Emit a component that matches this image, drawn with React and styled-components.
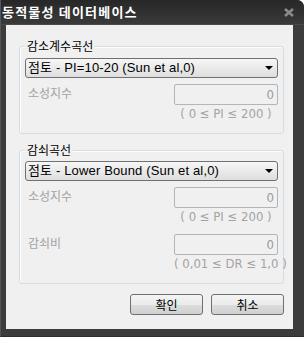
import React, { useState } from "react";
import styled, { createGlobalStyle } from "styled-components";

const GlobalStyle = createGlobalStyle`
  html, body {
    margin: 0;
    padding: 0;
    background: #ffffff;
  }
  body {
    font-family: "Liberation Sans", "Noto Sans CJK KR", sans-serif;
  }
`;

const Window = styled.div`
  width: 304px;
  height: 337px;
  box-sizing: border-box;
  display: flex;
  flex-direction: column;
  background: #3c3c3c;
  border-left: 1px solid #555555;
  border-bottom: 1px solid #2e2e2e;
  border-top-right-radius: 7px;
  overflow: hidden;
`;

const TitleBar = styled.div`
  height: 24px;
  flex: none;
  display: flex;
  align-items: center;
  justify-content: space-between;
  padding: 0 10px 0 1px;
  background: linear-gradient(#272727, #3a3a3a);
  border-bottom: 1px solid #4a4a4a;
`;

const Title = styled.span`
  color: #ffffff;
  font-family: "Noto Sans CJK KR", sans-serif;
  font-size: 13px;
  font-weight: 700;
  line-height: 16px;
  letter-spacing: 1.2px;
`;

const CloseIcon = () => (
  <svg width="10" height="9" viewBox="0 0 10 9">
    <path d="M1 1 L9 8 M9 1 L1 8" stroke="#8c8c8c" strokeWidth="2.4" />
  </svg>
);

const Body = styled.div`
  flex: 1;
  margin: 0 11px 7px 5px;
  background: #f0f0f0;
  display: flex;
  flex-direction: column;
  padding: 21px 9px 0 13px;
  box-sizing: border-box;
`;

const Group = styled.div`
  flex: none;
  display: flex;
  flex-direction: column;
  border: 1px solid #d3dde5;
  border-radius: 3px;
  box-shadow: inset 1px 1px 0 #ffffff;
  padding: 0 5px ${(p) => p.$bottom}px 5px;
  margin-bottom: ${(p) => p.$gap}px;
`;

const Legend = styled.span`
  align-self: flex-start;
  height: 16px;
  margin-top: -9px;
  padding: 0 2px;
  background: #f0f0f0;
  color: #000000;
  font-family: "Noto Sans CJK KR", sans-serif;
  font-size: 12px;
  line-height: 16px;
`;

const SelectBox = styled.div`
  flex: none;
  margin-top: ${(p) => p.$top}px;
  height: 20px;
  box-sizing: border-box;
  display: flex;
  align-items: center;
  justify-content: space-between;
  padding: 0 4px 0 2px;
  border: 1px solid #707070;
  border-radius: 3px;
  background: linear-gradient(#f6f6f6, #dedede);
  color: #000000;
  font-size: 13px;
  overflow: hidden;
  cursor: default;
`;

const SelectText = styled.span`
  line-height: 16px;
  letter-spacing: 0.15px;
  white-space: nowrap;
`;

const Arrow = styled.span`
  width: 0;
  height: 0;
  border-left: 4px solid transparent;
  border-right: 4px solid transparent;
  border-top: 4px solid #000000;
`;

const FieldRow = styled.div`
  flex: none;
  height: 37px;
  margin-top: ${(p) => p.$top}px;
  display: flex;
  align-items: flex-start;
  justify-content: space-between;
`;

const Label = styled.span`
  height: 14px;
  margin: 2px 0 0 3px;
  color: #a3a3a3;
  font-family: "Noto Sans CJK KR", sans-serif;
  font-size: 12px;
  line-height: 14px;
`;

const Field = styled.div`
  width: 104px;
  display: flex;
  flex-direction: column;
`;

const Input = styled.div`
  height: 21px;
  box-sizing: border-box;
  border: 1px solid #b5b5b5;
  border-radius: 2px;
  background: #f0f0f0;
  color: #9a9a9a;
  font-family: "Liberation Sans Narrow", "DejaVu Sans Condensed", "Liberation Sans", sans-serif;
  font-size: 13px;
  line-height: 19px;
  text-align: right;
  padding-right: 3px;
`;

const Hint = styled.div`
  height: 14px;
  margin-top: 2px;
  color: #a3a3a3;
  font-family: "Liberation Sans Narrow", "DejaVu Sans Condensed", "Liberation Sans", sans-serif;
  font-size: 13px;
  line-height: 14px;
  text-align: center;
  white-space: nowrap;
`;

const Buttons = styled.div`
  flex: none;
  display: flex;
  justify-content: flex-end;
  gap: 8px;
`;

const Button = styled.button`
  width: 73px;
  height: 21px;
  padding: 0;
  border: 1px solid #707070;
  border-radius: 3px;
  background: linear-gradient(#f4f4f4 0%, #ebebeb 50%, #dddddd 51%, #d0d0d0 100%);
  color: #000000;
  font-family: "Noto Sans CJK KR", sans-serif;
  font-size: 12px;
  line-height: 17px;
`;

const Dropdown = ({ top, value }) => (
  <SelectBox $top={top}>
    <SelectText>{value}</SelectText>
    <Arrow />
  </SelectBox>
);

const NumberField = ({ label, value, hint, top }) => (
  <FieldRow $top={top}>
    <Label>{label}</Label>
    <Field>
      <Input>{value}</Input>
      <Hint>{hint}</Hint>
    </Field>
  </FieldRow>
);

export default function App() {
  const [values] = useState({ pi1: "0", pi2: "0", dr: "0" });

  return (
    <>
      <GlobalStyle />
      <Window>
        <TitleBar>
          <Title>동적물성 데이터베이스</Title>
          <CloseIcon />
        </TitleBar>
        <Body>
          <Group $bottom={12} $gap={16}>
            <Legend>감소계수곡선</Legend>
            <Dropdown top={4} value="점토 - PI=10-20 (Sun et al,0)" />
            <NumberField top={6} label="소성지수" value={values.pi1} hint="( 0 ≤ PI ≤ 200 )" />
          </Group>
          <Group $bottom={12} $gap={10}>
            <Legend>감쇠곡선</Legend>
            <Dropdown top={3} value="점토 - Lower Bound (Sun et al,0)" />
            <NumberField top={6} label="소성지수" value={values.pi2} hint="( 0 ≤ PI ≤ 200 )" />
            <NumberField top={10} label="감쇠비" value={values.dr} hint="( 0,01 ≤ DR ≤ 1,0 )" />
          </Group>
          <Buttons>
            <Button>확인</Button>
            <Button>취소</Button>
          </Buttons>
        </Body>
      </Window>
    </>
  );
}
